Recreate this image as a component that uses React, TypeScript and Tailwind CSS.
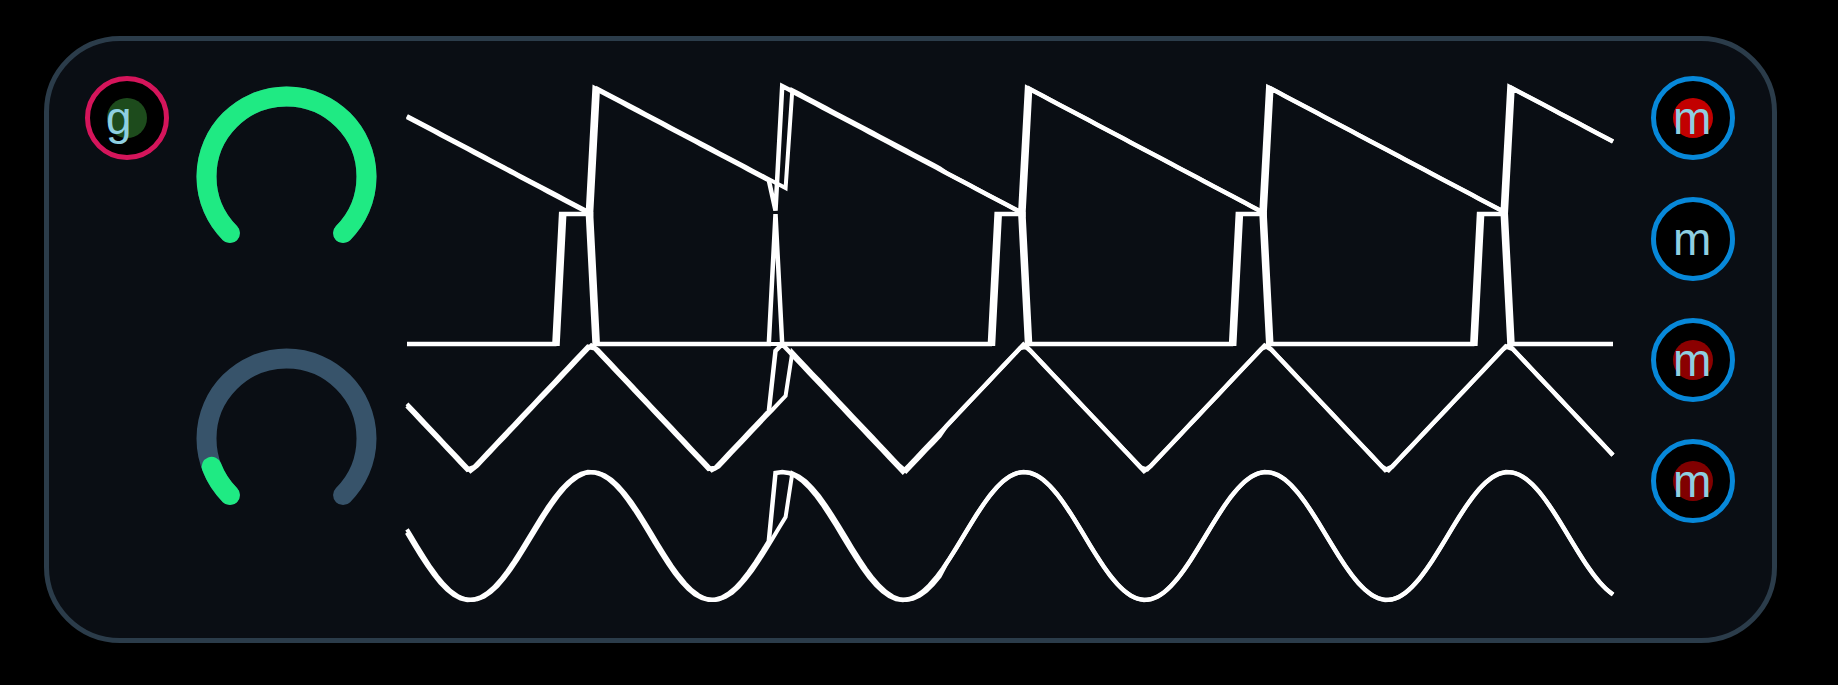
import React from 'react';

type Kind = 'saw' | 'square' | 'tri' | 'sine';

const X0 = 407;
const X1 = 1613;
const PERIOD = 242;

// two overlapping scope frames; frame A resets phase at x≈774, frame B a little later,
// then B lags a couple of pixels until it snaps back at x≈945
function phaseA(x: number) {
  const p = x < 774 ? (x - 348.5) / PERIOD : (x - 782) / PERIOD;
  return p - Math.floor(p);
}
function phaseB(x: number) {
  const p = x < 789 ? (x - 350.5) / PERIOD : x < 945 ? (x - 784.5) / PERIOD : (x - 782) / PERIOD;
  return p - Math.floor(p);
}

function level(kind: Kind, p: number) {
  if (kind === 'saw') return 86 + p * 128;
  if (kind === 'square') return p >= 0.875 ? 214 : 344;
  if (kind === 'tri') return p < 0.5 ? 344 + p * 256 : 344 + (1 - p) * 256;
  return 536 - 64 * Math.cos(2 * Math.PI * p);
}

function trace(kind: Kind, phase: (x: number) => number, offset: number) {
  const step = 6.7;
  const pts: [number, number][] = [[X0, level(kind, phase(X0))]];
  for (let x = X0 + offset; x < X1; x += step) {
    if (x > X0) pts.push([x, level(kind, phase(x))]);
  }
  pts.push([X1, level(kind, phase(X1))]);
  return 'M' + pts.map(([x, y]) => `${x.toFixed(1)} ${y.toFixed(1)}`).join(' L');
}

const kinds: Kind[] = ['saw', 'square', 'tri', 'sine'];

function arcPoint(deg: number, r = 80, c = 90.5) {
  const a = (deg * Math.PI) / 180;
  return `${(c + r * Math.cos(a)).toFixed(2)} ${(c + r * Math.sin(a)).toFixed(2)}`;
}

function Knob({ value }: { value: number }) {
  const start = 135;
  const end = start + 270 * value;
  const full = `M ${arcPoint(135)} A 80 80 0 1 1 ${arcPoint(45)}`;
  const val = `M ${arcPoint(start)} A 80 80 0 ${end - start > 180 ? 1 : 0} 1 ${arcPoint(end)}`;
  return (
    <svg width={181} height={181} viewBox="0 0 181 181" className="block">
      <path d={full} fill="none" stroke="#37536a" strokeWidth={20} strokeLinecap="round" />
      {value > 0 && (
        <path d={value >= 1 ? full : val} fill="none" stroke="#1fea83" strokeWidth={20} strokeLinecap="round" />
      )}
    </svg>
  );
}

function RoundButton({
  label,
  ring,
  dot,
  textLeft,
}: {
  label: string;
  ring: string;
  dot?: string;
  textLeft: string;
}) {
  return (
    <div className={`relative h-[84px] w-[84px] rounded-full border-[5px] bg-black ${ring}`}>
      {dot && <div className={`absolute left-[17px] top-[17px] h-[40px] w-[40px] rounded-full ${dot}`} />}
      <span
        className={`absolute top-[14px] ${textLeft} text-[46px] leading-none text-[#8ecfe1]`}
        style={{ fontFamily: '"Liberation Sans", Arial, sans-serif' }}
      >
        {label}
      </span>
    </div>
  );
}

export default function App() {
  return (
    <div className="min-h-[685px] w-full bg-black pl-[44px] pt-[36px]">
      <div className="flex h-[607px] w-[1733px] items-start rounded-[76px] border-[5px] border-[#2b3c4a] bg-[#0a0e14]">
        {/* gate */}
        <div className="ml-[36px] mt-[35px]">
          <RoundButton label="g" ring="border-[#d5155b]" dot="bg-[#1d4b1c]" textLeft="left-[16px]" />
        </div>

        {/* knobs */}
        <div className="ml-[27px] mt-[45px] flex flex-col gap-[81px]">
          <Knob value={1} />
          <Knob value={0.09} />
        </div>

        {/* scope */}
        <svg className="ml-[28px] mt-[39px] block" width={1210} height={526} viewBox="405 80 1210 526">
          {kinds.map((k) => (
            <g key={k} fill="none" stroke="#ffffff">
              <path d={trace(k, phaseB, 3.35)} strokeWidth={4} />
              <path d={trace(k, phaseA, 6.7)} strokeWidth={4.5} />
            </g>
          ))}
        </svg>

        {/* mod buttons */}
        <div className="ml-[36px] mt-[35px] flex flex-col gap-[37px]">
          <RoundButton label="m" ring="border-[#0788d9]" dot="bg-[#c20000]" textLeft="left-[17px]" />
          <RoundButton label="m" ring="border-[#0788d9]" textLeft="left-[17px]" />
          <RoundButton label="m" ring="border-[#0788d9]" dot="bg-[#8b0000]" textLeft="left-[17px]" />
          <RoundButton label="m" ring="border-[#0788d9]" dot="bg-[#800000]" textLeft="left-[17px]" />
        </div>
      </div>
    </div>
  );
}
